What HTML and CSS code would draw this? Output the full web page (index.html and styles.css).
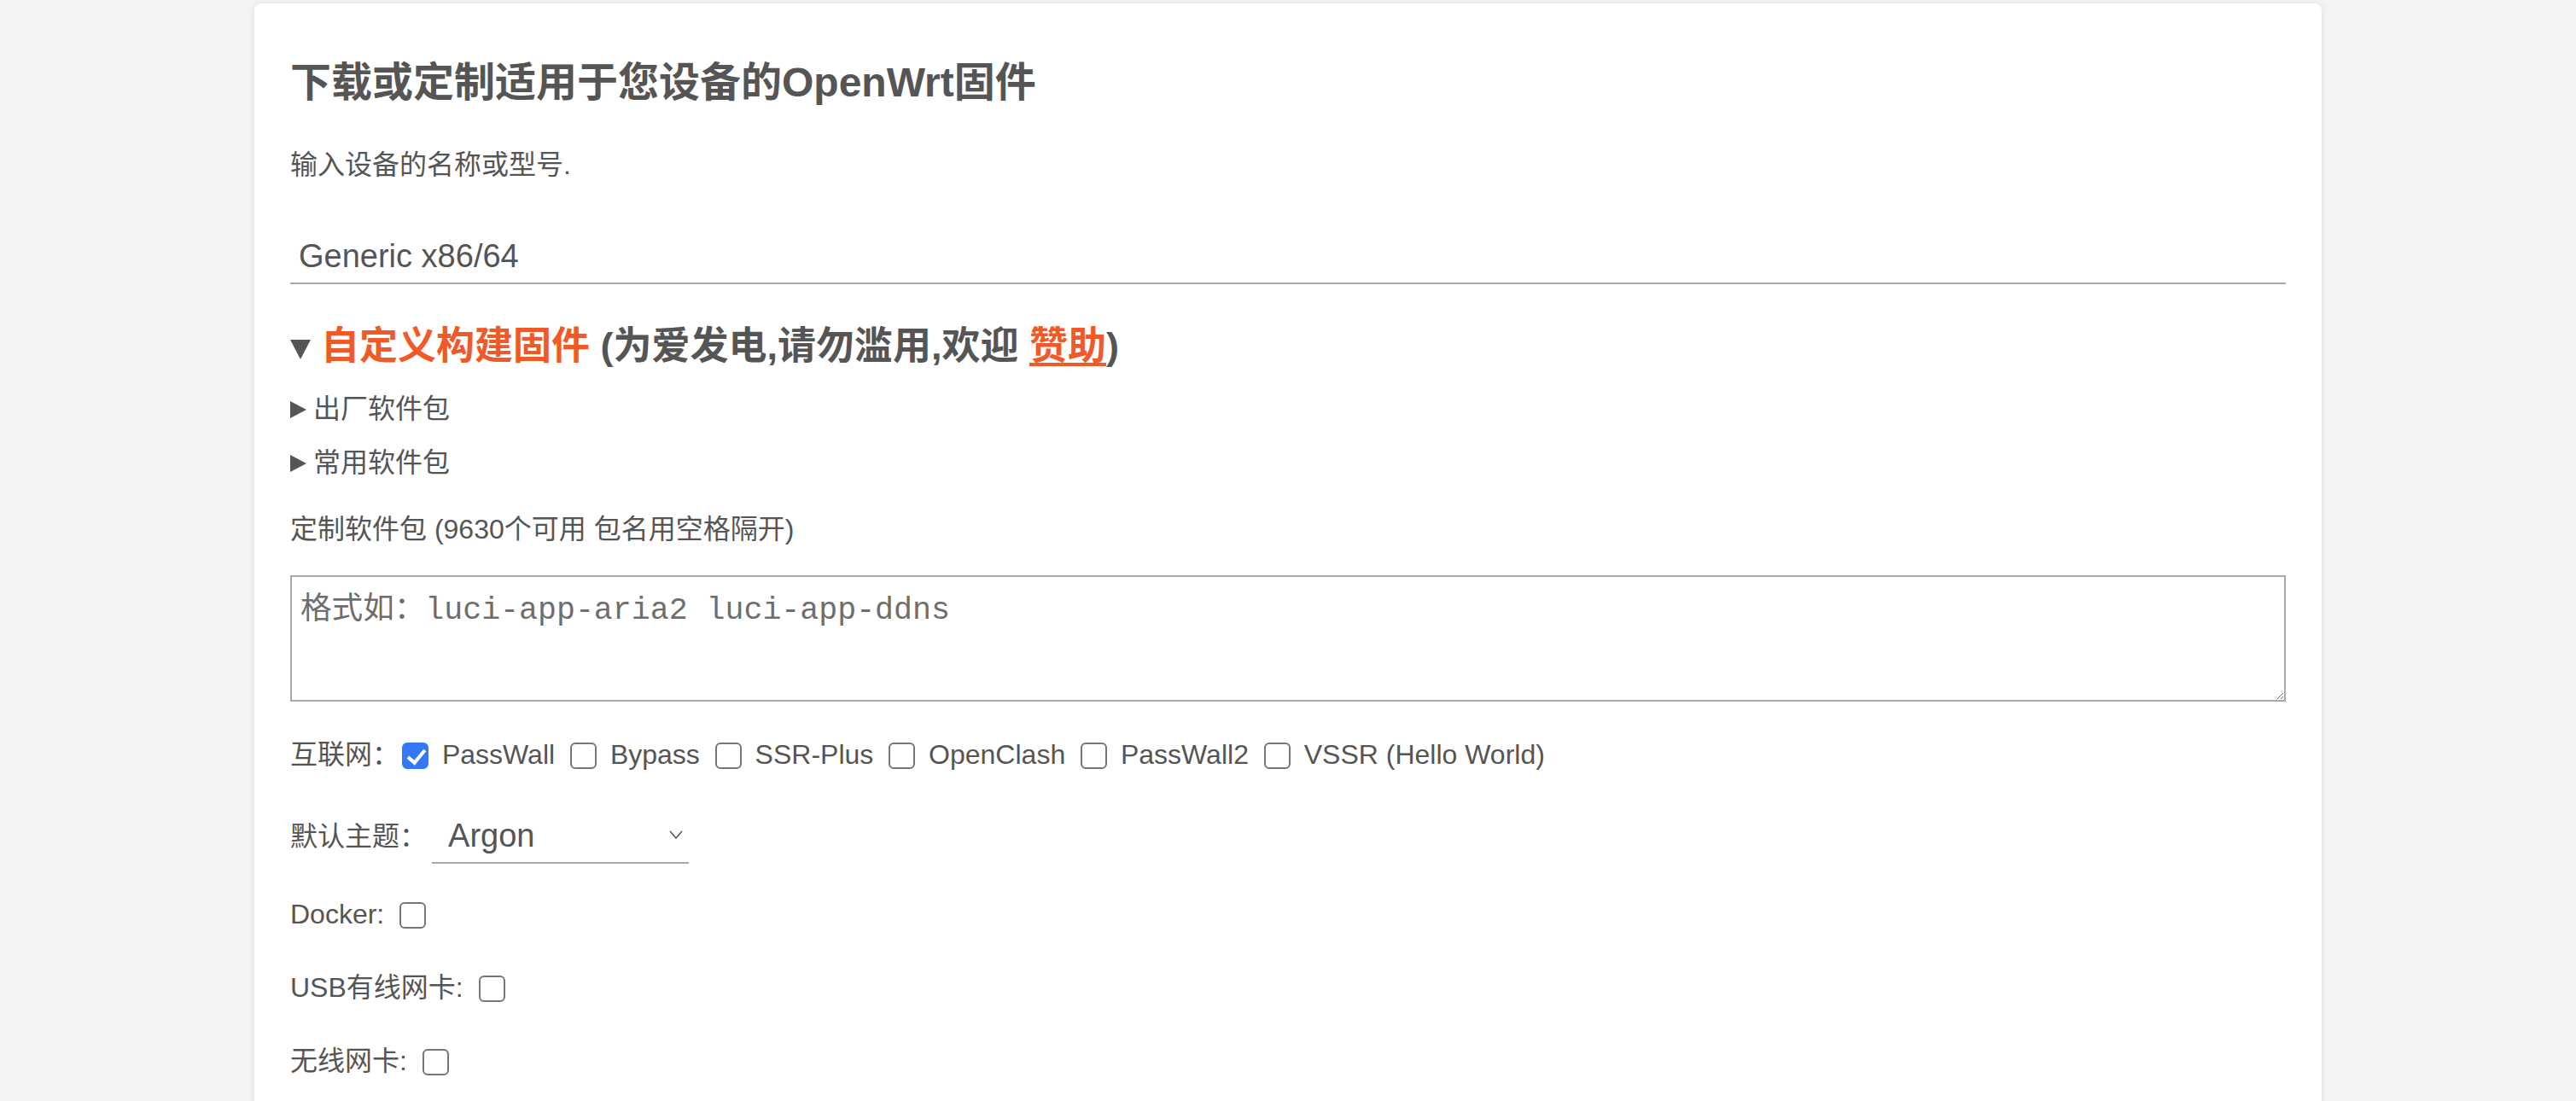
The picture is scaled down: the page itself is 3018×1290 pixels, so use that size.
FILE: index.html
```html
<!DOCTYPE html>
<html lang="zh-CN">
<head>
  <meta charset="UTF-8" />
  <meta name="viewport" content="width=device-width, initial-scale=1" />
  <title>OpenWrt 固件下载</title>
  <link rel="stylesheet" href="styles.css">
</head>
<body>

  <main class="card">
    <h2 class="title">下载或定制适用于您设备的OpenWrt固件</h2>
    <p class="hint">输入设备的名称或型号.</p>
    <input class="model-input" type="text" value="Generic x86/64">

    <details class="custom" open>
      <summary class="custom-summary"><span class="accent">自定义构建固件</span> (为爱发电,请勿滥用,欢迎 <a href="#" class="accent">赞助</a>)</summary>

      <details class="pkg-group">
        <summary>出厂软件包</summary>
      </details>
      <details class="pkg-group">
        <summary>常用软件包</summary>
      </details>

      <p class="field-label">定制软件包 (9630个可用 包名用空格隔开)</p>
      <textarea class="pkg-input" placeholder="格式如：luci-app-aria2 luci-app-ddns"></textarea>

      <div class="row net-row">
        互联网<span class="colon">：</span><input type="checkbox" checked> PassWall
        <input type="checkbox"> Bypass
        <input type="checkbox"> SSR-Plus
        <input type="checkbox"> OpenClash
        <input type="checkbox"> PassWall2
        <input type="checkbox"> VSSR (Hello World)
      </div>

      <div class="row theme-row">
        <span>默认主题<span class="colon">：</span></span>
        <span class="select-wrap">
          <select class="theme-select">
            <option>Argon</option>
            <option>Bootstrap</option>
            <option>Material</option>
          </select>
          <svg class="chevron" width="16" height="10" viewBox="0 0 16 10">
            <path d="M1 1 L8 9 L15 1" fill="none" stroke="#555" stroke-width="1.6"/>
          </svg>
        </span>
      </div>

      <div class="row opt-row docker-row">Docker: <input type="checkbox"></div>
      <div class="row opt-row">USB有线网卡: <input type="checkbox"></div>
      <div class="row opt-row">无线网卡: <input type="checkbox"></div>
    </details>
  </main>

</body>
</html>
```

FILE: styles.css
```css
:root {
  --bg-color: #f4f4f4;
  --card-bg: #ffffff;
  --text-color: #555555;
  --accent-color: #f05a28;
  --line-color: #a9a9a9;
  --box-color: #767676;
  --check-color: #3478f6;
  --font-stack: "Liberation Sans", "Noto Sans CJK SC", sans-serif;
}

* {
  margin: 0;
  padding: 0;
  box-sizing: border-box;
}

body {
  font-family: var(--font-stack);
  font-size: 32px;
  line-height: 40px;
  background-color: var(--bg-color);
  color: var(--text-color);
}

.card {
  width: 2422px;
  margin: 4px auto 0;
  padding: 65px 42px 120px;
  background-color: var(--card-bg);
  border-radius: 8px;
  box-shadow: 0 0 8px rgba(0, 0, 0, 0.1);
}

.title {
  font-size: 48px;
  line-height: 56px;
  font-weight: bold;
}

.hint {
  margin-top: 48px;
}

/* centred full-width colon, as on the original screen */
.colon {
  font-family: "Noto Sans CJK JP", sans-serif;
  line-height: 1;
}

.model-input {
  display: block;
  width: 100%;
  height: 64px;
  margin-top: 56px;
  padding: 0 10px;
  border: none;
  border-bottom: 2px solid var(--line-color);
  font-family: var(--font-stack);
  font-size: 38px;
  color: var(--text-color);
  background: transparent;
  outline: none;
}

/* details / summary */
summary {
  list-style: none;
  cursor: pointer;
}

summary::-webkit-details-marker {
  display: none;
}

.custom {
  margin-top: 47px;
}

.custom-summary {
  font-size: 45px;
  line-height: 52px;
  font-weight: bold;
}

.custom-summary::before {
  content: "";
  display: inline-block;
  width: 24px;
  height: 23px;
  margin-right: 12px;
  background-color: var(--text-color);
  clip-path: polygon(0 0, 100% 0, 50% 100%);
}

.accent {
  color: var(--accent-color);
}

a.accent {
  text-decoration: underline;
  text-underline-offset: 4px;
}

.pkg-group {
  margin-top: 27px;
}

.pkg-group + .pkg-group {
  margin-top: 23px;
}

.pkg-group summary::before {
  content: "";
  display: inline-block;
  width: 19px;
  height: 20px;
  margin-right: 8px;
  background-color: var(--text-color);
  clip-path: polygon(0 0, 100% 50%, 0 100%);
}

.field-label {
  margin-top: 38px;
}

.pkg-input {
  display: block;
  width: 100%;
  height: 148px;
  margin-top: 34px;
  padding: 18px 10px 10px;
  border: 2px solid var(--line-color);
  font-family: "Liberation Mono", "Noto Sans CJK JP", monospace;
  font-size: 36.6px;
  line-height: 44px;
  color: var(--text-color);
  resize: vertical;
  outline: none;
}

.pkg-input::placeholder {
  color: #6e6e6e;
}

/* checkbox rows */
.row {
  white-space: nowrap;
}

.net-row {
  margin-top: 42px;
}

input[type="checkbox"] {
  appearance: none;
  -webkit-appearance: none;
  position: relative;
  width: 31px;
  height: 31px;
  margin: 0 7px 0 9px;
  border: 2px solid var(--box-color);
  border-radius: 6px;
  background-color: #fff;
  vertical-align: -6px;
}

.net-row .colon + input[type="checkbox"] {
  margin-left: 3px;
}

input[type="checkbox"]:checked {
  border-color: var(--check-color);
  background-color: var(--check-color);
}

input[type="checkbox"]:checked::after {
  content: "";
  position: absolute;
  left: 9px;
  top: 2px;
  width: 8px;
  height: 17px;
  border-right: 4px solid #fff;
  border-bottom: 4px solid #fff;
  transform: rotate(40deg);
}

.theme-row {
  display: flex;
  align-items: center;
  margin-top: 44px;
}

.select-wrap {
  position: relative;
  margin-left: 6px;
}

.theme-select {
  appearance: none;
  -webkit-appearance: none;
  display: block;
  width: 301px;
  height: 64px;
  padding: 0 40px 0 19px;
  border: none;
  border-bottom: 2px solid var(--line-color);
  border-radius: 0;
  background: transparent;
  font-family: var(--font-stack);
  font-size: 38px;
  color: var(--text-color);
  outline: none;
}

.chevron {
  position: absolute;
  right: 7px;
  top: 25px;
  pointer-events: none;
}

.docker-row {
  margin-top: 39px;
}

.opt-row + .opt-row {
  margin-top: 46px;
}
```
